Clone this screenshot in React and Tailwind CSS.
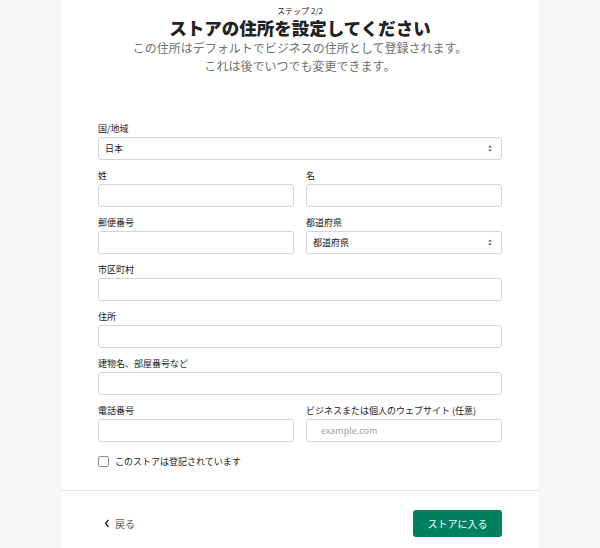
import React from 'react';

const font = { fontFamily: '"Noto Sans CJK JP", "Noto Sans", sans-serif' };

const Label = ({ children }) => (
    <div className="text-[9px] leading-[12px] text-[#202223] mb-[2px]">{children}</div>
);

const Input = ({ placeholder }) => (
    <div className="h-[23px] border border-[#d2d4d6] rounded-[3px] bg-white flex items-center px-[14px] text-[9px] text-[#a0a4a8]">
        {placeholder}
    </div>
);

const Select = ({ value }) => (
    <div className="h-[23px] border border-[#d2d4d6] rounded-[3px] bg-white flex items-center justify-between pl-[6px] pr-[8px] text-[9px] text-[#202223]">
        <span>{value}</span>
        <svg width="6" height="9" viewBox="0 0 6 9">
            <path d="M1 3.5 L3 1.5 L5 3.5 Z M1 5.5 L3 7.5 L5 5.5 Z" fill="#5c5f62" />
        </svg>
    </div>
);

const Field = ({ label, children, className = '' }) => (
    <div className={className}>
        <Label>{label}</Label>
        {children}
    </div>
);

export default function App() {
    return (
        <div className="w-[600px] h-[548px] bg-[#f6f6f7] flex justify-center overflow-hidden" style={font}>
            <div className="w-[478px] bg-white flex flex-col">
                <div className="text-center pt-[5px]">
                    <div className="text-[8px] leading-[12px] text-[#202223]">ステップ 2/2</div>
                    <h1 className="text-[17.5px] leading-[22px] font-black text-[#202223]">ストアの住所を設定してください</h1>
                    <p className="text-[12px] leading-[18px] text-[#6d7175]">
                        この住所はデフォルトでビジネスの住所として登録されます。<br />
                        これは後でいつでも変更できます。
                    </p>
                </div>

                <div className="px-[37px] mt-[48px] flex flex-col gap-[10px]">
                    <Field label="国/地域"><Select value="日本" /></Field>
                    <div className="grid grid-cols-2 gap-x-[12px]">
                        <Field label="姓"><Input /></Field>
                        <Field label="名"><Input /></Field>
                    </div>
                    <div className="grid grid-cols-2 gap-x-[12px]">
                        <Field label="郵便番号"><Input /></Field>
                        <Field label="都道府県"><Select value="都道府県" /></Field>
                    </div>
                    <Field label="市区町村"><Input /></Field>
                    <Field label="住所"><Input /></Field>
                    <Field label="建物名、部屋番号など"><Input /></Field>
                    <div className="grid grid-cols-2 gap-x-[12px]">
                        <Field label="電話番号"><Input /></Field>
                        <Field label="ビジネスまたは個人のウェブサイト (任意)"><Input placeholder="example.com" /></Field>
                    </div>
                    <label className="flex items-center gap-[6px] mt-[3px] text-[9px] text-[#202223]">
                        <span className="w-[11px] h-[11px] border border-[#8c9196] rounded-[2px] bg-white" />
                        このストアは登記されています
                    </label>
                </div>

                <div className="border-t border-[#e4e5e7] mt-[21px] flex items-center justify-between pl-[43px] pr-[37px] pt-[19px]">
                    <div className="flex items-center gap-[5px] text-[10px] text-[#202223]">
                        <svg width="6" height="9" viewBox="0 0 6 9">
                            <path d="M4.5 1 L1.5 4.5 L4.5 8" stroke="#202223" strokeWidth="1.3" fill="none" />
                        </svg>
                        <span className="text-[#5c5f62]">戻る</span>
                    </div>
                    <button className="w-[89px] h-[27px] rounded-[3px] bg-[#008060] text-white text-[10px]">
                        ストアに入る
                    </button>
                </div>
            </div>
        </div>
    );
}
